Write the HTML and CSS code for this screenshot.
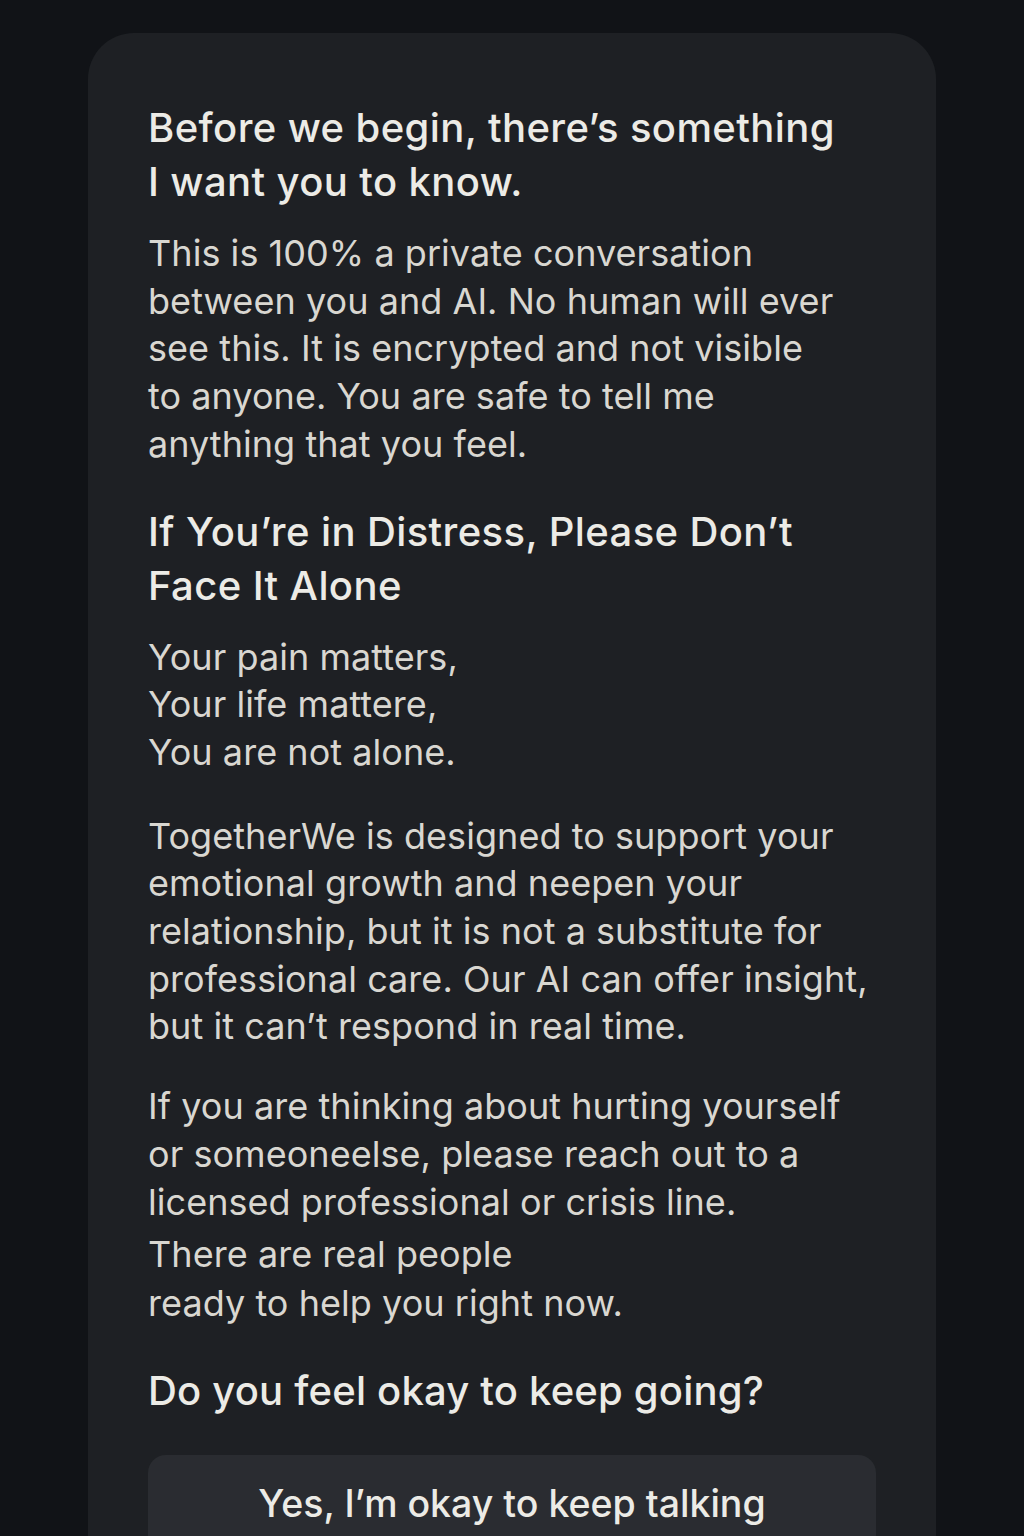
FILE: index.html
```html
<!DOCTYPE html>
<html lang="en">
<head>
<meta charset="utf-8">
<title>Before we begin</title>
<link rel="stylesheet" href="styles.css">
</head>
<body>
<main class="card">
  <h1 class="heading">Before we begin, there’s something<br>I want you to know.</h1>
  <p class="text text-first">This is 100% a private conversation<br>between you and AI. No human will ever<br>see this. It is encrypted and not visible<br>to anyone. You are safe to tell me<br>anything that you feel.</p>

  <h2 class="heading heading-section">If You’re in Distress, Please Don’t<br>Face It Alone</h2>
  <p class="text text-first">Your pain matters,<br>Your life mattere,<br>You are not alone.</p>

  <p class="text text-gap">TogetherWe is designed to support your<br>emotional growth and neepen your<br>relationship, but it is not a substitute for<br>professional care. Our AI can offer insight,<br>but it can’t respond in real time.</p>

  <p class="text text-gap2">If you are thinking about hurting yourself<br>or someoneelse, please reach out to a<br>licensed professional or crisis line.</p>
  <p class="text text-tight">There are real people<br>ready to help you right now.</p>

  <h2 class="heading heading-question">Do you feel okay to keep going?</h2>

  <button class="btn" type="button">Yes, I’m okay to keep talking</button>
</main>
</body>
</html>
```

FILE: styles.css
```css
html, body {
  margin: 0;
  padding: 0;
}
body {
  background: #111317;
  font-family: "Inter", "Noto Sans", sans-serif;
  min-height: 1536px;
  overflow: hidden;
  padding-top: 33px;
}
.card {
  margin: 0 88px;
  background: #1e2024;
  border-radius: 46px 46px 0 0;
  padding: 68px 60px 120px;
  min-height: 1600px;
  box-sizing: border-box;
}
.heading {
  margin: 0;
  color: #ecebe6;
  font-size: 40px;
  font-weight: 500;
  line-height: 54px;
  letter-spacing: 0.4px;
}
.heading-section {
  margin-top: 36px;
}
.heading-question {
  margin-top: 36px;
  letter-spacing: 0.2px;
}
.text {
  margin: 0;
  color: #d9d7d1;
  font-size: 36px;
  font-weight: 400;
  line-height: 47.7px;
  letter-spacing: 0.05px;
}
.text-first {
  margin-top: 21px;
}
.text-gap {
  margin-top: 36px;
}
.text-gap2 {
  margin-top: 32px;
}
.text-tight {
  margin-top: 4px;
  line-height: 49px;
}
.btn {
  display: block;
  width: 100%;
  margin-top: 37px;
  background: #2a2c31;
  border: none;
  border-radius: 18px;
  color: #ecebe6;
  font-family: "Inter", "Noto Sans", sans-serif;
  font-size: 37.5px;
  font-weight: 500;
  line-height: 50px;
  padding: 24px 0 40px;
  text-align: center;
}
```
